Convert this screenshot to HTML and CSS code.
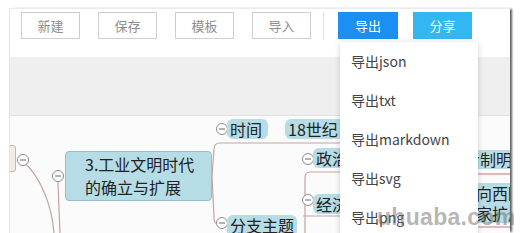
FILE: index.html
```html
<!DOCTYPE html>
<html lang="zh-CN">
<head>
<meta charset="utf-8">
<title>脑图编辑</title>
<link rel="stylesheet" href="styles.css">
</head>
<body>
<div class="app">
  <div class="toolbar">
    <button class="btn">新建</button>
    <button class="btn">保存</button>
    <button class="btn">模板</button>
    <button class="btn">导入</button>
    <span class="sep"></span>
    <div class="dropdown">
      <button class="btn btn-primary">导出</button>
      <ul class="menu">
        <li>导出json</li>
        <li>导出txt</li>
        <li>导出markdown</li>
        <li>导出svg</li>
        <li>导出png</li>
      </ul>
    </div>
    <button class="btn btn-share">分享</button>
  </div>
  <div class="band"></div>
  <div class="canvas">
    <svg class="links" width="500" height="117" viewBox="0 0 500 117">
      <g fill="none" stroke="#c6a3a3" stroke-width="1.2">
        <path d="M16 48 C 30 62, 42 88, 44 118"/>
        <path d="M48 66 L 50 118"/>
        <path d="M202 60 L 204 33 Q 204 27 210 27 L 340 27"/>
        <path d="M202 60 L 204 101 Q 204 107 206 107"/>
        <path d="M340 56 L 300 56 Q 295 56 295 62 L 295 118"/>
        <path d="M293 100 L 340 100"/>
      </g>
      <g stroke="#d48a8a" stroke-width="1.2">
        <path d="M468 58 L 500 58"/>
        <path d="M468 111 L 500 111"/>
      </g>
      <g fill="#fff" stroke="#8c8c8c" stroke-width="1">
        <circle cx="13" cy="44" r="5.5"/>
        <circle cx="48" cy="60" r="5.5"/>
        <circle cx="212" cy="13" r="5.5"/>
        <circle cx="212" cy="107" r="5.5"/>
        <circle cx="298" cy="43" r="5.5"/>
        <circle cx="298" cy="84" r="5.5"/>
      </g>
      <g stroke="#666" stroke-width="1">
        <path d="M10 44 H16 M45 60 H51 M209 13 H215 M209 107 H215 M295 43 H301 M295 84 H301"/>
      </g>
    </svg>
    <div class="node node-root"></div>
    <div class="node node-main">3.工业文明时代<br>的确立与扩展</div>
    <div class="node node-time">时间</div>
    <div class="node node-century">18世纪</div>
    <div class="node node-pol">政治</div>
    <div class="node node-eco">经济</div>
    <div class="node node-branch">分支主题</div>
    <div class="node node-r1">专制明主</div>
    <div class="node node-r2">向西欧<br>家扩展</div>
  </div>
</div>
<div class="watermark">uhuaba.com</div>
</body>
</html>
```
FILE: styles.css
```css
* { box-sizing: border-box; }
html, body { margin: 0; padding: 0; }
body {
  background: #fff;
  width: 521px;
  height: 233px;
  overflow: hidden;
  font-family: "Noto Sans CJK SC", "Noto Sans", sans-serif;
  position: relative;
}
.app {
  margin: 8px 0 0 9px;
  width: 501px;
  height: 225px;
  border-top: 1px solid #ececec;
  border-left: 1px solid #e4e4e4;
  box-shadow: 3px 0 2px -1px rgba(40, 40, 40, 0.75);
  display: flex;
  flex-direction: column;
  overflow: visible;
}
.toolbar {
  height: 48px;
  flex: none;
  background: #fff;
  display: flex;
  align-items: flex-start;
  padding: 3px 0 0 11px;
  gap: 18px;
  position: relative;
  z-index: 5;
}
.btn {
  width: 59px;
  height: 27px;
  border: 1px solid #cfcfcf;
  background: #fff;
  color: #8e8e8e;
  font-family: "Noto Sans CJK SC", sans-serif;
  font-size: 13px;
  padding: 0;
  line-height: 25px;
  border-radius: 0;
}
.sep {
  width: 1px;
  height: 28px;
  background: #e6e6e6;
  margin-left: -6px;
  margin-right: -4px;
}
.dropdown { position: relative; }
.btn-primary {
  width: 60px;
  background: #1b8ff3;
  border-color: #1b8ff3;
  color: #fff;
}
.btn-share {
  margin-left: -3px;
  background: #32b7f3;
  border-color: #32b7f3;
  color: #fff;
}
.menu {
  position: absolute;
  left: 2px;
  top: 30px;
  width: 138px;
  height: 200px;
  margin: 0;
  padding: 0;
  list-style: none;
  background: #fff;
  box-shadow: 0 1px 6px rgba(0, 0, 0, 0.18);
}
.menu li {
  height: 39px;
  line-height: 39px;
  padding-left: 11px;
  font-size: 14px;
  color: #444;
}
.band {
  height: 59px;
  flex: none;
  background: #efefef;
  border-bottom: 1px solid #e0e0e0;
}
.canvas {
  flex: 1;
  position: relative;
  background: #fbfbfb;
  overflow: hidden;
}
.links { position: absolute; left: 0; top: 0; }
.node {
  position: absolute;
  background: #b6dce5;
  color: #222;
  font-size: 16px;
  line-height: 20px;
  border-radius: 6px;
  white-space: nowrap;
  overflow: hidden;
}
.node-root {
  left: -6px; top: 29px; width: 12px; height: 27px;
  background: #f3eaea;
  border: 1px solid #cfb0b0;
  border-radius: 3px;
}
.node-main {
  left: 55px; top: 35px; width: 147px; height: 50px;
  border: 1px solid #95bfcb;
  border-radius: 4px;
  padding: 1px 0 0 19px;
  line-height: 23px;
}
.node-time { left: 217px; top: 3px; width: 41px; height: 20px; padding-left: 3px; }
.node-century { left: 275px; top: 3px; width: 80px; height: 20px; padding-left: 3px; }
.node-pol { left: 303px; top: 32px; width: 50px; height: 20px; padding-left: 3px; }
.node-eco { left: 303px; top: 78px; width: 50px; height: 20px; padding-left: 3px; }
.node-branch { left: 217px; top: 99px; width: 70px; height: 22px; padding-left: 3px; }
.node-r1 { left: 440px; top: 34px; width: 66px; height: 19px; padding-left: 14px; border-radius: 0; line-height: 19px; }
.node-r2 { left: 440px; top: 67px; width: 66px; height: 40px; padding-left: 26px; border-radius: 0; }
.watermark {
  position: absolute;
  left: 377px;
  top: 204px;
  font-family: "Liberation Sans", Arial, sans-serif;
  font-weight: bold;
  font-size: 23px;
  letter-spacing: 0.3px;
  color: rgba(110, 110, 110, 0.5);
  z-index: 10;
  pointer-events: none;
}
```
